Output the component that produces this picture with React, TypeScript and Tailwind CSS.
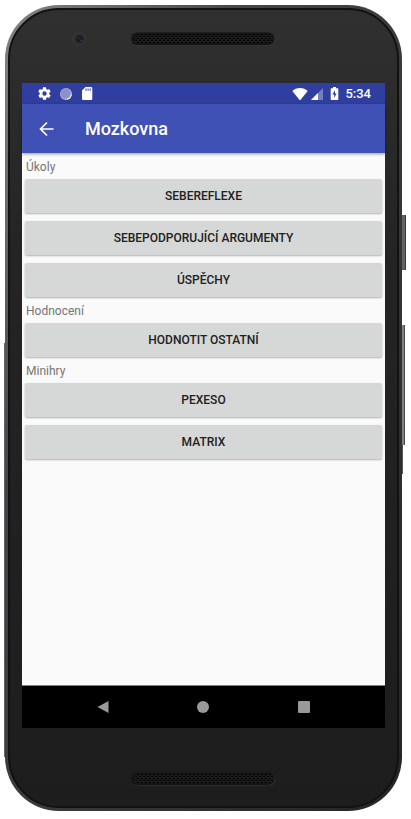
import { useId } from "react";

type Section = { title: string; items: string[] };

const sections: Section[] = [
  { title: "Úkoly", items: ["Sebereflexe", "Sebepodporující argumenty", "Úspěchy"] },
  { title: "Hodnocení", items: ["Hodnotit ostatní"] },
  { title: "Minihry", items: ["Pexeso", "Matrix"] },
];

function Speaker() {
  const id = useId();
  return (
    <svg width="146" height="14" viewBox="0 0 146 14" aria-hidden="true">
      <defs>
        <pattern id={id} width="4" height="4" patternUnits="userSpaceOnUse">
          <rect width="4" height="4" fill="#191919" />
          <rect x="0" y="0" width="2" height="1" fill="#050505" />
          <rect x="2" y="2" width="2" height="1" fill="#050505" />
          <rect x="0" y="1" width="1" height="1" fill="#2b2b2b" />
        </pattern>
      </defs>
      <rect x="1" y="1" width="143" height="12.6" rx="6.3" fill="#3b3b3b" />
      <rect x="0" y="0.5" width="143.5" height="12.5" rx="6.2" fill="#141414" />
      <rect x="2" y="2" width="140" height="9" rx="4.5" fill={`url(#${id})`} />
    </svg>
  );
}

function Camera() {
  return (
    <svg width="16" height="16" viewBox="0 0 16 16" aria-hidden="true">
      <circle cx="8" cy="8" r="7.5" fill="#343334" />
      <circle cx="8.3" cy="8" r="4.800" fill="#29272a" />
      <circle cx="8.5" cy="8" r="3.200" fill="#1b181f" />
      <circle cx="7.5" cy="7" r="1.2" fill="#28283a" />
      <circle cx="10.300" cy="9.400" r="0.8" fill="#71434d" />
    </svg>
  );
}

function StatusBar() {
  return (
    <div className="flex h-[21px] items-center bg-[#303f9f] pr-[14px] pl-[15px] text-white">
      <svg width="15" height="15" viewBox="0 0 24 24" fill="#fff" aria-hidden="true">
        <path d="M19.4 13c.1-.3.1-.7.1-1s0-.7-.1-1l2.1-1.7c.2-.1.2-.4.1-.6l-2-3.500c-.1-.2-.4-.3-.6-.2l-2.500 1c-.5-.4-1.100-.7-1.700-1l-.4-2.600c0-.2-.2-.4-.5-.4h-4c-.2 0-.5.2-.5.4L9.100 5c-.6.3-1.200.6-1.700 1l-2.500-1c-.2-.1-.5 0-.6.2l-2 3.500c-.1.2-.1.5.1.6L4.500 11c0 .3-.1.7-.1 1s0 .7.1 1l-2.100 1.700c-.2.1-.2.4-.1.6l2 3.500c.1.2.4.3.6.2l2.500-1c.5.4 1.100.7 1.700 1l.4 2.600c0 .2.2.4.500.4h4c.2 0 .5-.2.5-.4l.4-2.600c.6-.3 1.200-.6 1.700-1l2.500 1c.2.1.5 0 .6-.2l2-3.500c.1-.2.1-.5-.1-.6L19.400 13zM12 15.500a3.500 3.500 0 1 1 0-7 3.500 3.500 0 0 1 0 7z" />
      </svg>
      <svg className="ml-[7px]" width="14" height="14" viewBox="0 0 14 14" aria-hidden="true">
        <circle cx="7" cy="7" r="6" fill="#aeb4dc" />
        <circle cx="6.700" cy="6.600" r="5" fill="#8a91cc" />
        <path d="M12.400 7.500A5.600 5.600 0 0 1 8 12.300" fill="none" stroke="#fff" strokeWidth="1" />
      </svg>
      <svg className="ml-[7px]" width="14" height="15" viewBox="0 0 14 15" aria-hidden="true">
        <path d="M5.500 1h5.500a1.300 1.300 0 0 1 1.300 1.300v10.400A1.300 1.300 0 0 1 11 14H3.300A1.300 1.300 0 0 1 2 12.700V4.500z" fill="#fff" />
        <path d="M5.500 2.500h1v2.200h-1zM7.600 2.500h1v2.200h-1zM9.700 2.500h1v2.200h-1z" fill="#303f9f" />
      </svg>
      <div className="ml-auto flex items-center">
        <svg width="16" height="14" viewBox="0 0 16 14" aria-hidden="true">
          <path d="M.3 4C2.300 2 5 1 8 1s5.700 1 7.700 3L8.800 12.500a1 1 0 0 1-1.600 0z" fill="#fff" />
        </svg>
        <svg className="ml-[2px]" width="14" height="14" viewBox="0 0 14 14" aria-hidden="true">
          <path d="M13 1v12H1z" fill="#757fc0" />
          <path d="M8 6v7H1z" fill="#fff" />
        </svg>
        <svg className="ml-[6px]" width="9" height="15" viewBox="0 0 9 15" aria-hidden="true">
          <path d="M3 1h3v1.300h1.500a.8.8 0 0 1 .8.8v10.200a.8.8 0 0 1-.8.8h-6a.8.8 0 0 1-.8-.8V3.100a.8.8 0 0 1 .8-.8H3z" fill="#fff" />
          <path d="M5 4.300 2.400 8.600h1.700v3.300l2.500-4.400H5z" fill="#303f9f" />
        </svg>
        <span className="ml-[6px] text-[13px] leading-5 font-medium">5:34</span>
      </div>
    </div>
  );
}

function AppBar() {
  return (
    <header className="relative flex h-[49px] items-center bg-[#3f51b5] pl-4 text-white shadow-[0_1px_3px_rgba(0,0,0,0.4)]">
      <button type="button" aria-label="Zpět" className="block">
        <svg width="18" height="18" viewBox="0 0 18 18" fill="none" stroke="#fff" strokeWidth="1.700" aria-hidden="true">
          <path d="M15.500 9H2.800M9 2.500 2.500 9 9 15.500" />
        </svg>
      </button>
      <h1 className="ml-[29px] text-[18px] leading-6 font-medium">Mozkovna</h1>
    </header>
  );
}

function NavBar() {
  return (
    <nav className="flex h-[43px] items-center justify-around border-t border-[#7e8582] bg-black px-[31px]">
      <button type="button" aria-label="Zpět">
        <svg width="14" height="14" viewBox="0 0 14 14" aria-hidden="true">
          <path d="M12.500 1v12L1.500 7z" fill="#999" />
        </svg>
      </button>
      <button type="button" aria-label="Domů">
        <svg width="14" height="14" viewBox="0 0 14 14" aria-hidden="true">
          <circle cx="7" cy="7" r="6" fill="#999" />
        </svg>
      </button>
      <button type="button" aria-label="Přehled">
        <svg width="14" height="14" viewBox="0 0 14 14" aria-hidden="true">
          <rect x="1" y="1" width="12" height="12" rx="1" fill="#999" />
        </svg>
      </button>
    </nav>
  );
}

export default function App() {
  return (
    <div className="flex min-h-dvh flex-col bg-white pt-[5px] pr-[9px] pb-2 pl-[5px] font-['Roboto',sans-serif]">
      <div className="relative flex flex-1 flex-col">
        {/* hardware keys on the edges of the case */}
        <span className="absolute top-[338px] bottom-[54px] -left-px w-1 bg-[#606264]" />
        <span className="absolute top-[210px] -right-1 h-[55px] w-1 border-r border-[#3a3838] bg-[#666263]" />
        <span className="absolute top-[320px] -right-[3px] h-[120px] w-[3px] border-r border-[#4a4746] bg-[#858080]" />
        <span className="absolute top-[440px] -right-px h-[29px] w-px bg-[#555]" />

        <div className="relative flex flex-1 flex-col rounded-[54px] bg-linear-to-br from-[#858585] via-[#444546] via-30% to-[#262526] p-[3px]">
          <div className="flex flex-1 flex-col rounded-[51px] border-2 border-[#121212] bg-linear-to-b from-[#303031] via-[#242424] via-30% to-[#1d1d1e] px-3">
            <div className="grid h-[73px] grid-cols-[1fr_auto_1fr] items-center pt-[1px] pb-[16px]">
              <span className="ml-[49px]">
                <Camera />
              </span>
              <Speaker />
            </div>

            <div className="flex flex-1 flex-col bg-[#fafafa]">
              <StatusBar />
              <AppBar />
              <main className="flex-1">
                {sections.map((section) => (
                  <section key={section.title} className="px-[3px]">
                    <h2 className="px-px pt-1 pb-[2px] text-[12px] leading-5 text-[#757575]">{section.title}</h2>
                    <div className="flex flex-col gap-2">
                      {section.items.map((item) => (
                        <button
                          key={item}
                          type="button"
                          className="h-[34px] rounded-[2px] bg-[#d6d7d7] text-[12px] leading-5 font-medium text-[#212121] uppercase shadow-[0_1px_2px_rgba(0,0,0,0.3)]"
                        >
                          {item}
                        </button>
                      ))}
                    </div>
                  </section>
                ))}
              </main>
              <NavBar />
            </div>

            <div className="flex h-[78px] items-center justify-center pt-6">
              <Speaker />
            </div>
          </div>
        </div>
      </div>
    </div>
  );
}
